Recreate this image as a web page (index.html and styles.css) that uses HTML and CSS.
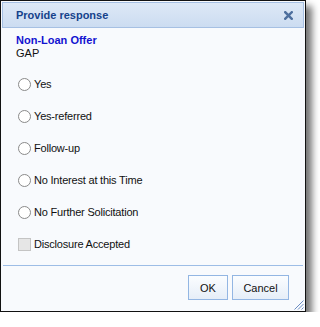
FILE: index.html
```html
<!DOCTYPE html>
<html>
<head>
<meta charset="utf-8">
<link rel="stylesheet" href="styles.css">
</head>
<body>
<div class="dialog">
  <div class="header">
    <span class="title">Provide response</span>
    <svg class="close" width="9" height="9" viewBox="0 0 9 9"><path d="M1.2 1.2 L7.8 7.8 M7.8 1.2 L1.2 7.8" stroke="#4d6f9e" stroke-width="2.4" stroke-linecap="square"/></svg>
  </div>
  <div class="body">
    <div class="offer-name">Non-Loan Offer</div>
    <div class="offer-sub">GAP</div>
    <div class="options">
      <label class="option"><span class="radio"></span>Yes</label>
      <label class="option"><span class="radio"></span>Yes-referred</label>
      <label class="option"><span class="radio"></span>Follow-up</label>
      <label class="option"><span class="radio"></span>No Interest at this Time</label>
      <label class="option"><span class="radio"></span>No Further Solicitation</label>
      <label class="option"><span class="check"></span>Disclosure Accepted</label>
    </div>
  </div>
  <div class="footer">
    <button class="btn btn-ok">OK</button>
    <button class="btn btn-cancel">Cancel</button>
  </div>
  <svg class="grip" width="11" height="11" viewBox="0 0 11 11"><path d="M10.5 1.5 L1.5 10.5 M10.5 5 L5 10.5 M10.5 8.5 L8.5 10.5" stroke="#6a8cc2" stroke-width="1"/></svg>
</div>
</body>
</html>
```
FILE: styles.css
```css
html, body {
  margin: 0;
  padding: 0;
  background: #ffffff;
}
body {
  font-family: "Liberation Sans", Arial, sans-serif;
  font-size: 11px;
  color: #111;
}
.dialog {
  position: relative;
  box-sizing: border-box;
  width: 306px;
  height: 312px;
  border: 1px solid #111;
  background: #f8fafd;
  box-shadow: 6px 6px 7px rgba(0, 0, 0, 0.55);
  display: flex;
  flex-direction: column;
}
.header {
  margin: 1px 1px 0 1px;
  height: 26px;
  box-sizing: border-box;
  border: 1px solid #a6c0e3;
  background: linear-gradient(#dde8f6, #ccdcf1);
  display: flex;
  align-items: center;
  justify-content: space-between;
  padding: 0 10px 0 13px;
}
.title {
  font-weight: bold;
  font-size: 11px;
  color: #15428b;
}
.close {
  display: block;
}
.body {
  flex: 1;
  padding: 6px 0 0 15px;
}
.offer-name {
  font-weight: bold;
  color: #1212d0;
  line-height: 13px;
}
.offer-sub {
  line-height: 13px;
}
.options {
  margin-top: 18px;
  margin-left: 2px;
  display: flex;
  flex-direction: column;
  gap: 19px;
}
.option {
  display: flex;
  align-items: center;
  height: 13px;
  line-height: 13px;
  gap: 3px;
  letter-spacing: -0.2px;
}
.radio {
  box-sizing: border-box;
  width: 13px;
  height: 13px;
  border-radius: 50%;
  border: 1px solid #8a8a8a;
  background: #fff;
}
.check {
  box-sizing: border-box;
  width: 13px;
  height: 13px;
  border: 1px solid #c4c4c4;
  background: #e6e6e6;
}
.footer {
  margin: 0 2px;
  border-top: 1px solid #9dbde6;
  padding: 9px 14px 11px 0;
  display: flex;
  justify-content: flex-end;
  gap: 4px;
}
.btn {
  box-sizing: border-box;
  height: 25px;
  border: 1px solid #93b6e3;
  background: linear-gradient(#fbfdff, #e6eef8);
  font-family: "Liberation Sans", Arial, sans-serif;
  font-size: 11px;
  color: #111;
  padding: 0;
  margin: 0;
}
.btn-ok {
  width: 40px;
}
.btn-cancel {
  width: 57px;
}
.grip {
  position: absolute;
  right: 1px;
  bottom: 1px;
}
```
